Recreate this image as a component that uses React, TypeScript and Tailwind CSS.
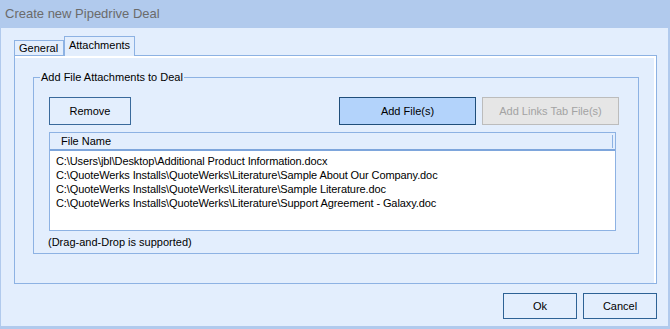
import React from 'react';

const files = [
  'C:\\Users\\jbl\\Desktop\\Additional Product Information.docx',
  'C:\\QuoteWerks Installs\\QuoteWerks\\Literature\\Sample About Our Company.doc',
  'C:\\QuoteWerks Installs\\QuoteWerks\\Literature\\Sample Literature.doc',
  'C:\\QuoteWerks Installs\\QuoteWerks\\Literature\\Support Agreement - Galaxy.doc',
];

function App() {
  return (
    <div
      className="w-[670px] h-[329px] flex flex-col bg-[#b1caed] text-[11px] text-black"
      style={{ fontFamily: '"Liberation Sans", Arial, sans-serif' }}
    >
      <div className="h-[28px] flex items-center pl-[5px] text-[13px] text-[#6b6b6b]">
        Create new Pipedrive Deal
      </div>

      <div className="flex-1 ml-[1px] mr-[2px] mb-[3px] bg-[#e3eefd] flex flex-col pl-[13px] pr-[11px] pt-[8px]">
        {/* tabs */}
        <div className="flex items-end h-[19px]">
          <div className="w-[50px] h-[15px] border border-b-0 border-[#8db2e3] flex items-center pl-[4px] pt-[1px]">
            General
          </div>
          <div className="w-[71px] h-[20px] -mb-px border border-b-0 border-[#8db2e3] bg-[#e3eefd] flex items-center justify-center relative z-10 pb-[3px]">
            Attachments
          </div>
        </div>

        {/* tab page */}
        <div className="w-[643px] h-[229px] border border-[#8db2e3] shadow-[inset_-2px_2px_0_#ffffff] pl-[18px] pt-[14px]">
          <fieldset className="w-[606px] h-[184px] border border-[#8db2e3] px-[15px] pt-[13px] pb-0 m-0">
            <legend className="-ml-[9px] px-[1px] leading-[14px]">Add File Attachments to Deal</legend>

            <div className="flex items-center">
              <button className="w-[82px] h-[28px] border border-[#3a6a9b] bg-[#e3eefd]">
                Remove
              </button>
              <button className="ml-[208px] w-[137px] h-[28px] border border-[#1f4e7a] bg-[#b3d3fb]">
                Add File(s)
              </button>
              <button className="ml-[6px] w-[137px] h-[28px] border border-[#bcbcbc] bg-[#e6e6e6] text-[#a3a3a3]">
                Add Links Tab File(s)
              </button>
            </div>

            <div className="mt-[7px] w-[567px] h-[99px] border border-[#8db2e3] bg-white flex flex-col">
              <div className="h-[18px] flex items-center bg-[#e3eefd] border-b-[2px] border-[#7ea6dc]">
                <div className="flex-1 pl-[11px]">File Name</div>
                <div className="w-px h-[13px] bg-[#8db2e3] mr-[2px]" />
              </div>
              <div className="pt-[3px] pl-[6px] tracking-[-0.1px]">
                {files.map((f) => (
                  <div key={f} className="h-[14px] leading-[14px] whitespace-nowrap">
                    {f}
                  </div>
                ))}
              </div>
            </div>

            <div className="mt-[4px] -ml-[1px] leading-[14px]">(Drag-and-Drop is supported)</div>
          </fieldset>
        </div>

        {/* dialog buttons */}
        <div className="flex justify-end gap-[6px] mt-[9px] w-[643px]">
          <button className="w-[74px] h-[26px] border border-[#2e6295] bg-[#e3eefd]">Ok</button>
          <button className="w-[74px] h-[26px] border border-[#2e6295] bg-[#e3eefd]">Cancel</button>
        </div>
      </div>
    </div>
  );
}

export default App;
